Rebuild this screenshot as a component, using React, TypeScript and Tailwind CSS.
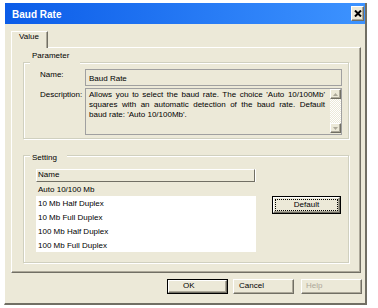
import React from "react";

const raised =
  "border border-t-white border-l-white border-r-[#716F64] border-b-[#716F64] shadow-[inset_-1px_-1px_0_#ACA899]";
const etched =
  "relative border border-[#D0D0BF] shadow-[inset_1px_1px_0_#ffffff,1px_1px_0_#ffffff]";

function Arrow({ up }: { up?: boolean }) {
  return (
    <svg width="5" height="3" viewBox="0 0 5 3">
      {up ? (
        <polygon points="0,3 5,3 2.5,0" fill="#ACA899" />
      ) : (
        <polygon points="0,0 5,0 2.5,3" fill="#ACA899" />
      )}
    </svg>
  );
}

export default function App() {
  const rows = [
    "Auto 10/100 Mb",
    "10 Mb Half Duplex",
    "10 Mb Full Duplex",
    "100 Mb Half Duplex",
    "100 Mb Full Duplex",
  ];
  return (
    <div className="w-[378px] h-[308px] overflow-hidden bg-white pt-[3px] font-['Liberation_Sans',Arial,sans-serif] text-[8px] leading-[10px] text-black">
      <div className="ml-[4px] flex h-[302px] w-[363px] flex-col border-l border-b-2 border-r-2 border-l-white border-b-[#716F64] border-r-[#716F64] bg-[#ECE9D8]">
        {/* Title bar */}
        <div className="flex h-[21px] shrink-0 items-start bg-[linear-gradient(to_right,#0B5CE8,#3D93FF)]">
          <span className="ml-[7px] mt-[6px] text-[10px] font-bold leading-[11px] text-white">
            Baud Rate
          </span>
          <div
            className={`ml-auto mr-[1px] mt-[3px] flex h-[15px] w-[13px] items-center justify-center bg-[#ECE9D8] ${raised}`}
          >
            <svg width="8" height="7" viewBox="0 0 8 7">
              <path d="M1 0.5 L7 6.5 M7 0.5 L1 6.5" stroke="black" strokeWidth="2" />
            </svg>
          </div>
        </div>

        {/* Tab */}
        <div className="relative z-10 -mb-px ml-[6px] mt-[7px] h-[17px] w-[37px] border-l border-t border-r border-l-white border-t-white border-r-[#716F64] bg-[#ECE9D8] pl-[7px] shadow-[inset_-1px_0_0_#ACA899]">
          Value
        </div>

        {/* Panel */}
        <div className="ml-[6px] h-[226px] w-[350px] border border-l-white border-t-white border-r-[#716F64] border-b-[#716F64] shadow-[inset_-1px_-1px_0_#ACA899]">
          {/* Parameter group */}
          <div className={`ml-[11px] mt-[14px] h-[77px] w-[326px] ${etched}`}>
            <div className="absolute -top-[1px] left-[6px] h-[2px] w-[50px] bg-[#ECE9D8]" />
            <div className="absolute -top-[12px] left-[8px]">Parameter</div>
            <div className="ml-[16px] mt-[6px] flex">
              <div className="w-[45px] pt-[1px]">Name:</div>
              <div className="h-[17px] w-[257px] border border-[#A0A0A0] pl-[3px] pt-[4px]">
                Baud Rate
              </div>
            </div>
            <div className="ml-[16px] mt-[2px] flex">
              <div className="w-[45px] pt-[2px]">Description:</div>
              <div className="flex h-[47px] w-[257px] border border-[#A0A0A0]">
                <div className="flex-1 pl-[3px] pr-[5px] pt-[1px]">
                  <div className="text-justify [text-align-last:justify]">
                    Allows you to select the baud rate. The choice 'Auto 10/100Mb'
                  </div>
                  <div className="text-justify [text-align-last:justify]">
                    squares with an automatic detection of the baud rate. Default
                  </div>
                  <div>baud rate: 'Auto 10/100Mb'.</div>
                </div>
                <div className="flex w-[11px] flex-col pb-px">
                  <div className={`flex h-[10px] items-center justify-center bg-[#ECE9D8] ${raised}`}>
                    <Arrow up />
                  </div>
                  <div className="flex-1 bg-[repeating-conic-gradient(#ffffff_0%_25%,#ECE9D8_0%_50%)] bg-[length:2px_2px]" />
                  <div className={`flex h-[10px] items-center justify-center bg-[#ECE9D8] ${raised}`}>
                    <Arrow />
                  </div>
                </div>
              </div>
            </div>
          </div>

          {/* Setting group */}
          <div className={`ml-[11px] mt-[16px] h-[108px] w-[326px] ${etched}`}>
            <div className="absolute -top-[1px] left-[6px] h-[2px] w-[37px] bg-[#ECE9D8]" />
            <div className="absolute -top-[3px] left-[8px]">Setting</div>
            <div className="ml-[12px] mt-[13px] flex items-start">
              <div className="flex h-[83px] w-[220px] flex-col bg-white">
                <div className="h-[13px] w-[219px] border border-l-white border-t-white border-r-[#716F64] border-b-[#716F64] bg-[#ECE9D8] pl-[1px]">
                  Name
                </div>
                {rows.map((r, i) => (
                  <div
                    key={r}
                    className={`h-[14px] pl-[2px] pt-[1px] leading-[13px] ${
                      i === 0 ? "bg-[#ECE9D8]" : ""
                    }`}
                  >
                    {r}
                  </div>
                ))}
              </div>
              <div className="ml-[16px] mt-[27px] h-[18px] w-[69px] border border-black">
                <div className={`flex h-full w-full bg-[#ECE9D8] ${raised}`}>
                  <div className="m-px flex flex-1 items-center justify-center border border-dotted border-black">
                    Default
                  </div>
                </div>
              </div>
            </div>
          </div>
        </div>

        {/* Buttons */}
        <div className="ml-[162px] mt-[6px] flex">
          <div className="h-[15px] w-[61px] border border-black">
            <div className={`h-full w-full pl-[14px] ${raised}`}>OK</div>
          </div>
          <div className={`ml-[5px] h-[15px] w-[61px] pl-[5px] pt-[1px] ${raised}`}>Cancel</div>
          <div className={`ml-[7px] h-[15px] w-[61px] pl-[4px] pt-[1px] text-[#ACA899] ${raised}`}>
            Help
          </div>
        </div>
      </div>
    </div>
  );
}
